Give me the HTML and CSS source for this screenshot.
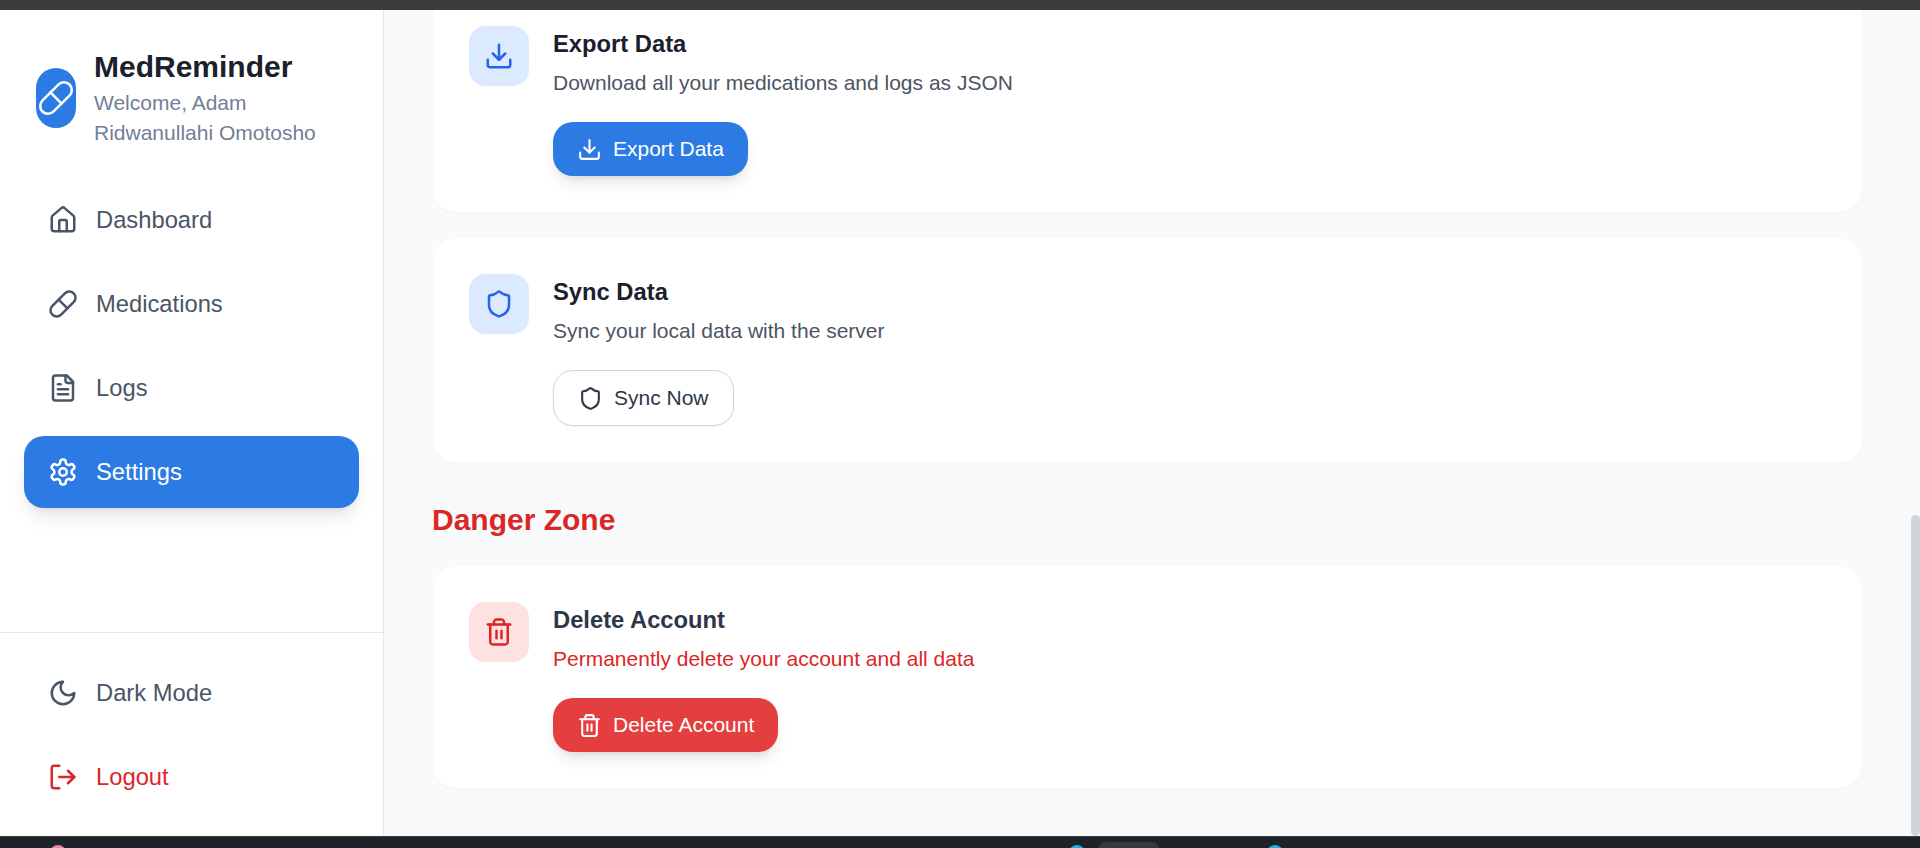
FILE: index.html
```html
<!DOCTYPE html>
<html>
  <head>
    <title>MedReminder - Settings</title>
    <link rel="stylesheet" href="styles.css">
  </head>
  <body>
    <div class="top-strip"></div>
    <div class="app">
      <aside class="sidebar">
        <div class="brand">
          <div class="brand-logo">
            <svg class="icon-brand" viewBox="0 0 24 24"><path d="m10.5 20.5 10-10a4.95 4.95 0 1 0-7-7l-10 10a4.95 4.95 0 1 0 7 7Z"/><path d="m8.5 8.5 7 7"/></svg>
          </div>
          <div>
            <h1>MedReminder</h1>
            <p>Welcome, Adam Ridwanullahi Omotosho</p>
          </div>
        </div>
        <nav class="nav">
          <a class="nav-item">
            <svg class="icon-nav" viewBox="0 0 24 24"><path d="M15 21v-8a1 1 0 0 0-1-1h-4a1 1 0 0 0-1 1v8"/><path d="M3 10a2 2 0 0 1 .709-1.528l7-5.999a2 2 0 0 1 2.582 0l7 5.999A2 2 0 0 1 21 10v9a2 2 0 0 1-2 2H5a2 2 0 0 1-2-2z"/></svg>
            Dashboard
          </a>
          <a class="nav-item">
            <svg class="icon-nav" viewBox="0 0 24 24"><path d="m10.5 20.5 10-10a4.95 4.95 0 1 0-7-7l-10 10a4.95 4.95 0 1 0 7 7Z"/><path d="m8.5 8.5 7 7"/></svg>
            Medications
          </a>
          <a class="nav-item">
            <svg class="icon-nav" viewBox="0 0 24 24"><path d="M15 2H6a2 2 0 0 0-2 2v16a2 2 0 0 0 2 2h12a2 2 0 0 0 2-2V7Z"/><path d="M14 2v4a2 2 0 0 0 2 2h4"/><path d="M10 9H8"/><path d="M16 13H8"/><path d="M16 17H8"/></svg>
            Logs
          </a>
          <a class="nav-item active">
            <svg class="icon-nav" viewBox="0 0 24 24"><path d="M12.22 2h-.44a2 2 0 0 0-2 2v.18a2 2 0 0 1-1 1.73l-.43.25a2 2 0 0 1-2 0l-.15-.08a2 2 0 0 0-2.73.73l-.22.38a2 2 0 0 0 .73 2.73l.15.1a2 2 0 0 1 1 1.72v.51a2 2 0 0 1-1 1.74l-.15.09a2 2 0 0 0-.73 2.73l.22.38a2 2 0 0 0 2.73.73l.15-.08a2 2 0 0 1 2 0l.43.25a2 2 0 0 1 1 1.73V20a2 2 0 0 0 2 2h.44a2 2 0 0 0 2-2v-.18a2 2 0 0 1 1-1.73l.43-.25a2 2 0 0 1 2 0l.15.08a2 2 0 0 0 2.73-.73l.22-.39a2 2 0 0 0-.73-2.73l-.15-.08a2 2 0 0 1-1-1.74v-.5a2 2 0 0 1 1-1.74l.15-.09a2 2 0 0 0 .73-2.73l-.22-.38a2 2 0 0 0-2.73-.73l-.15.08a2 2 0 0 1-2 0l-.43-.25a2 2 0 0 1-1-1.73V4a2 2 0 0 0-2-2z"/><circle cx="12" cy="12" r="3"/></svg>
            Settings
          </a>
        </nav>
        <div class="sidebar-footer">
          <a class="nav-item">
            <svg class="icon-nav" viewBox="0 0 24 24"><path d="M12 3a6 6 0 0 0 9 9 9 9 0 1 1-9-9Z"/></svg>
            Dark Mode
          </a>
          <a class="nav-item logout">
            <svg class="icon-nav" viewBox="0 0 24 24"><path d="M9 21H5a2 2 0 0 1-2-2V5a2 2 0 0 1 2-2h4"/><path d="m16 17 5-5-5-5"/><path d="M21 12H9"/></svg>
            Logout
          </a>
        </div>
      </aside>

      <main class="main">
        <div class="content">
          <section class="card">
            <div class="card-icon">
              <svg class="icon-card" viewBox="0 0 24 24"><path d="M21 15v4a2 2 0 0 1-2 2H5a2 2 0 0 1-2-2v-4"/><path d="m7 10 5 5 5-5"/><path d="M12 15V3"/></svg>
            </div>
            <div>
              <h3>Export Data</h3>
              <p class="card-desc">Download all your medications and logs as JSON</p>
              <button class="btn btn-primary" type="button">
                <svg class="icon-btn" viewBox="0 0 24 24"><path d="M21 15v4a2 2 0 0 1-2 2H5a2 2 0 0 1-2-2v-4"/><path d="m7 10 5 5 5-5"/><path d="M12 15V3"/></svg>
                Export Data
              </button>
            </div>
          </section>

          <section class="card">
            <div class="card-icon">
              <svg class="icon-card" viewBox="0 0 24 24"><path d="M20 13c0 5-3.5 7.5-7.66 8.95a1 1 0 0 1-.67-.01C7.5 20.5 4 18 4 13V6a1 1 0 0 1 1-1c2 0 4.5-1.2 6.24-2.72a1.17 1.17 0 0 1 1.52 0C14.51 3.81 17 5 19 5a1 1 0 0 1 1 1z"/></svg>
            </div>
            <div>
              <h3>Sync Data</h3>
              <p class="card-desc">Sync your local data with the server</p>
              <button class="btn btn-outline" type="button">
                <svg class="icon-btn" viewBox="0 0 24 24"><path d="M20 13c0 5-3.5 7.5-7.66 8.95a1 1 0 0 1-.67-.01C7.5 20.5 4 18 4 13V6a1 1 0 0 1 1-1c2 0 4.5-1.2 6.24-2.72a1.17 1.17 0 0 1 1.52 0C14.51 3.81 17 5 19 5a1 1 0 0 1 1 1z"/></svg>
                Sync Now
              </button>
            </div>
          </section>

          <h2 class="danger-title">Danger Zone</h2>

          <section class="card card-danger">
            <div class="card-icon">
              <svg class="icon-card" viewBox="0 0 24 24"><path d="M3 6h18"/><path d="M19 6v14c0 1-1 2-2 2H7c-1 0-2-1-2-2V6"/><path d="M8 6V4c0-1 1-2 2-2h4c1 0 2 1 2 2v2"/><path d="M10 11v6"/><path d="M14 11v6"/></svg>
            </div>
            <div>
              <h3>Delete Account</h3>
              <p class="card-desc">Permanently delete your account and all data</p>
              <button class="btn btn-danger" type="button">
                <svg class="icon-btn" viewBox="0 0 24 24"><path d="M3 6h18"/><path d="M19 6v14c0 1-1 2-2 2H7c-1 0-2-1-2-2V6"/><path d="M8 6V4c0-1 1-2 2-2h4c1 0 2 1 2 2v2"/><path d="M10 11v6"/><path d="M14 11v6"/></svg>
                Delete Account
              </button>
            </div>
          </section>
        </div>
        <div class="scroll-thumb"></div>
      </main>
    </div>
    <div class="taskbar">
      <span class="tray-dot tray-pink"></span>
      <span class="tray-dot tray-blue"></span>
      <span class="tray-tab"></span>
      <span class="tray-dot tray-blue tray-blue-2"></span>
    </div>
  </body>
</html>
```

FILE: styles.css
```css
* {
  box-sizing: border-box;
  font-family: "Liberation Sans", Arial, sans-serif;
}
html,
body {
  height: 100%;
}
body {
  margin: 0;
  display: flex;
  flex-direction: column;
  overflow: hidden;
  background: #f9fafc;
}
h1,
h2,
h3,
p {
  margin: 0;
}
svg {
  fill: none;
  stroke: currentColor;
  stroke-width: 2;
  stroke-linecap: round;
  stroke-linejoin: round;
  flex-shrink: 0;
}
.top-strip {
  height: 10px;
  flex-shrink: 0;
  background: #3c3c3c;
}
.app {
  flex: 1;
  display: flex;
  min-height: 0;
}

/* sidebar */
.sidebar {
  width: 384px;
  flex-shrink: 0;
  display: flex;
  flex-direction: column;
  background: #fff;
  border-right: 1px solid #e5e7eb;
}
.brand {
  display: flex;
  align-items: center;
  gap: 18px;
  padding: 37px 36px 0;
}
.brand-logo {
  width: 40px;
  height: 60px;
  flex-shrink: 0;
  display: flex;
  align-items: center;
  justify-content: center;
  border-radius: 20px;
  background: #2c7be5;
  color: #fff;
}
.icon-brand {
  width: 38px;
  height: 38px;
  stroke-width: 1.6;
}
.brand h1 {
  font-size: 30px;
  line-height: 40px;
  color: #1a202c;
}
.brand p {
  padding-top: 1px;
  font-size: 21px;
  line-height: 30px;
  color: #718096;
}
.nav {
  flex: 1;
  display: flex;
  flex-direction: column;
  gap: 12px;
  padding: 36px 24px 0;
}
.nav-item {
  display: flex;
  align-items: center;
  gap: 18px;
  height: 72px;
  padding: 0 24px;
  border-radius: 20px;
  font-size: 23.75px;
  color: #4a5568;
}
.icon-nav {
  width: 30px;
  height: 30px;
}
.nav-item.active {
  background: #2c7be5;
  color: #fff;
  box-shadow: 0 12px 20px -4px rgba(0, 0, 0, 0.1), 0 5px 8px -4px rgba(0, 0, 0, 0.08);
}
.sidebar-footer {
  display: flex;
  flex-direction: column;
  gap: 12px;
  padding: 24px 24px 23px;
  border-top: 1px solid #e5e7eb;
}
.nav-item.logout {
  color: #dc2626;
}

/* main column, scrolled to the bottom of the settings page */
.main {
  position: relative;
  flex: 1;
  overflow: hidden;
}
.content {
  display: flex;
  flex-direction: column;
  margin-top: -21px;
  padding: 0 57px 0 48px;
}
.card {
  display: flex;
  gap: 24px;
  padding: 36px;
  margin-bottom: 24px;
  border: 1px solid #f7f8f9;
  border-radius: 24px;
  background: #fff;
  box-shadow: 0 1px 3px rgba(0, 0, 0, 0.02);
}
.card-icon {
  width: 60px;
  height: 60px;
  flex-shrink: 0;
  display: flex;
  align-items: center;
  justify-content: center;
  border-radius: 16px;
  background: #dbeafe;
  color: #2563eb;
}
.icon-card {
  width: 30px;
  height: 30px;
}
.card h3 {
  font-size: 23.75px;
  line-height: 36px;
  color: #1a202c;
}
.card-desc {
  margin: 6px 0 24px;
  font-size: 21px;
  line-height: 30px;
  color: #4b5563;
}
.btn {
  display: flex;
  align-items: center;
  gap: 11px;
  height: 54px;
  padding: 0 24px;
  border: 0;
  border-radius: 20px;
  font-size: 21px;
}
.icon-btn {
  width: 25px;
  height: 25px;
}
.btn-primary {
  background: #2c7be5;
  color: #fff;
  box-shadow: 0 10px 15px -3px rgba(0, 0, 0, 0.1), 0 4px 6px -4px rgba(0, 0, 0, 0.1);
}
.btn-outline {
  height: 56px;
  border: 1.25px solid #d1d5db;
  background: #fff;
  color: #2d3748;
  box-shadow: 0 1px 2px rgba(0, 0, 0, 0.05);
}
.btn-danger {
  background: #e53e3e;
  color: #fff;
  box-shadow: 0 10px 15px -3px rgba(0, 0, 0, 0.1), 0 4px 6px -4px rgba(0, 0, 0, 0.1);
}
.danger-title {
  margin: 15px 0 27px;
  font-size: 30px;
  line-height: 36px;
  color: #dc2626;
}
.card-danger .card-icon {
  background: #fee2e2;
  color: #dc2626;
}
.card-danger h3 {
  color: #2d3748;
}
.card-danger .card-desc {
  color: #dc2626;
}
.scroll-thumb {
  position: absolute;
  top: 505px;
  right: 0;
  bottom: 0;
  width: 9px;
  border-radius: 5px;
  background: #d1d5db;
}

/* desktop taskbar, only the top of it is in shot */
.taskbar {
  position: relative;
  height: 12px;
  flex-shrink: 0;
  overflow: hidden;
  border-top: 1px solid #3b3f44;
  background: #1e2329;
}
.tray-dot {
  position: absolute;
  top: 8px;
  width: 16px;
  height: 16px;
  border-radius: 50%;
}
.tray-pink {
  left: 50px;
  background: #e58ba6;
}
.tray-blue {
  left: 1069px;
  background: #29a8e8;
}
.tray-blue-2 {
  left: 1267px;
}
.tray-tab {
  position: absolute;
  top: 5px;
  left: 1099px;
  width: 60px;
  height: 20px;
  border-radius: 6px;
  background: #353a41;
}
```
